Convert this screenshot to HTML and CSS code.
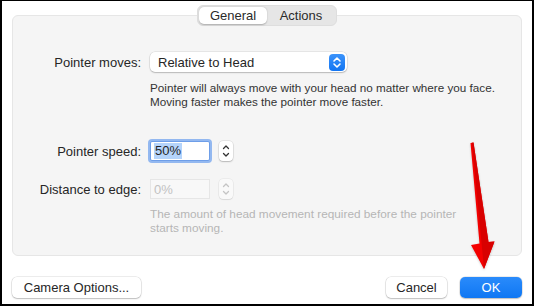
FILE: index.html
```html
<!DOCTYPE html>
<html lang="en">
<head>
  <meta charset="UTF-8" />
  <title>Head Pointer Options</title>
  <link rel="stylesheet" href="styles.css">
</head>
<body>
<div class="frame">
  <div class="tabs">
    <span class="tab active">General</span>
    <span class="tab">Actions</span>
  </div>

  <div class="panel">
    <div class="row first">
      <span class="lbl">Pointer moves:</span>
      <div class="popup">
        <span>Relative to Head</span>
        <span class="popup-arrows">
          <svg width="16" height="17" viewBox="0 0 16 17">
            <path d="M5 7 L8 4 L11 7" fill="none" stroke="#fff" stroke-width="1.6" stroke-linecap="round" stroke-linejoin="round"/>
            <path d="M5 10 L8 13 L11 10" fill="none" stroke="#fff" stroke-width="1.6" stroke-linecap="round" stroke-linejoin="round"/>
          </svg>
        </span>
      </div>
    </div>
    <p class="hint">Pointer will always move with your head no matter where you face.<br>Moving faster makes the pointer move faster.</p>

    <div class="row speed">
      <span class="lbl">Pointer speed:</span>
      <div class="field focus"><span class="sel">50%</span></div>
      <span class="stepper">
        <svg width="14" height="20" viewBox="0 0 14 20">
          <path d="M4.5 7.5 L7 5 L9.5 7.5" fill="none" stroke="#333" stroke-width="1.3" stroke-linecap="round" stroke-linejoin="round"/>
          <path d="M4.5 12.5 L7 15 L9.5 12.5" fill="none" stroke="#333" stroke-width="1.3" stroke-linecap="round" stroke-linejoin="round"/>
        </svg>
      </span>
    </div>

    <div class="row edge">
      <span class="lbl">Distance to edge:</span>
      <div class="field disabled">0%</div>
      <span class="stepper off">
        <svg width="14" height="20" viewBox="0 0 14 20">
          <path d="M4.5 7.5 L7 5 L9.5 7.5" fill="none" stroke="#c4c4c4" stroke-width="1.3" stroke-linecap="round" stroke-linejoin="round"/>
          <path d="M4.5 12.5 L7 15 L9.5 12.5" fill="none" stroke="#c4c4c4" stroke-width="1.3" stroke-linecap="round" stroke-linejoin="round"/>
        </svg>
      </span>
    </div>
    <p class="hint muted">The amount of head movement required before the pointer<br>starts moving.</p>
  </div>

  <div class="buttons">
    <button class="btn camera">Camera Options...</button>
    <button class="btn cancel">Cancel</button>
    <button class="btn primary">OK</button>
  </div>

  <!-- annotation arrow -->
  <svg class="arrow" width="534" height="306" viewBox="0 0 534 306">
    <polygon points="470.5,143 473.5,142.5 488.5,242 494.5,241.5 484,269 471,245 479.5,243.5" fill="#f40000"/>
    <polygon points="472,142.7 473.5,142.5 488.5,242 494.5,241.5 484,269" fill="#d80000"/>
  </svg>
</div>
</body>
</html>
```

FILE: styles.css
```css
body {
  margin: 0;
  font-family: "Liberation Sans", Arial, sans-serif;
  color: #262626;
}
.frame {
  position: relative;
  width: 534px;
  height: 306px;
  box-sizing: border-box;
  border-style: solid;
  border-color: #000;
  border-width: 1px 2px 2px 2px;
  background: #fff;
  display: flex;
  flex-direction: column;
  overflow: hidden;
}
.tabs {
  position: relative;
  z-index: 2;
  align-self: center;
  display: flex;
  margin: 4px 0 -11px;
  padding: 1px;
  width: 140px;
  height: 21px;
  box-sizing: border-box;
  background: #e6e6e6;
  border: 1px solid #dedede;
  border-radius: 6px;
  font-size: 13px;
}
.tab {
  flex: 1;
  display: flex;
  align-items: center;
  justify-content: center;
  border-radius: 5px;
  color: #2a2a2a;
}
.tab.active {
  background: #fff;
  box-shadow: 0 0.5px 1.5px rgba(0,0,0,0.25);
}
.panel {
  margin: 0 10px;
  padding: 36px 0 20px;
  background: #f5f5f5;
  border: 1px solid #e6e6e6;
  border-radius: 6px;
}
.row {
  display: flex;
  align-items: center;
  gap: 9px;
}
.lbl {
  width: 128px;
  text-align: right;
  font-size: 13px;
}
.popup {
  width: 197px;
  height: 20px;
  box-sizing: border-box;
  display: flex;
  align-items: center;
  justify-content: space-between;
  padding-left: 8px;
  background: #fff;
  border-radius: 5px;
  box-shadow: 0 0 0 0.5px rgba(0,0,0,0.12), 0 1px 1.5px rgba(0,0,0,0.2);
  font-size: 13px;
}
.popup-arrows {
  display: flex;
  width: 16px;
  height: 17px;
  margin-right: 2px;
  border-radius: 4px;
  background: linear-gradient(#3b93fb, #1275f2);
}
.hint {
  margin: 9px 0 0 137px;
  font-size: 11.7px;
  line-height: 14px;
  color: #333;
}
.hint.muted {
  margin-top: 8px;
  font-size: 11.8px;
  color: #b5b5b5;
}
.speed { margin-top: 32px; }
.edge { margin-top: 18px; }
.field {
  width: 60px;
  height: 20px;
  box-sizing: border-box;
  display: flex;
  align-items: center;
  padding-left: 3px;
  font-size: 13px;
  background: #fff;
  border: 1px solid #d6d6d6;
}
.field.focus {
  border-color: #6e9ee8;
  box-shadow: 0 0 0 2px #93b8f0;
  border-radius: 2px;
}
.sel {
  background: #b5d4fb;
  padding: 1px 1px;
  line-height: 14px;
}
.field.disabled {
  background: #f8f8f8;
  border-color: #e6e6e6;
  color: #c2c2c2;
}
.stepper {
  display: flex;
  width: 14px;
  height: 20px;
  background: #fff;
  border-radius: 4px;
  box-shadow: 0 0 0 0.5px rgba(0,0,0,0.12), 0 1px 1.5px rgba(0,0,0,0.2);
}
.stepper.off {
  background: #f9f9f9;
  box-shadow: 0 0 0 0.5px rgba(0,0,0,0.08), 0 1px 1px rgba(0,0,0,0.08);
}
.buttons {
  display: flex;
  align-items: center;
  gap: 13px;
  margin: 21px 10px 0;
}
.btn {
  height: 21px;
  padding: 0;
  font-family: inherit;
  font-size: 13px;
  color: #262626;
  background: #fff;
  border: none;
  border-radius: 5px;
  box-shadow: 0 0 0 0.5px rgba(0,0,0,0.14), 0 1px 1.5px rgba(0,0,0,0.2);
}
.camera { width: 129px; margin-right: auto; }
.cancel { width: 61px; }
.primary {
  width: 62px;
  color: #fff;
  background: linear-gradient(#2a8bfb, #0f77f3);
}
.arrow {
  position: absolute;
  top: -1px;
  left: -2px;
  pointer-events: none;
  filter: drop-shadow(0 1px 1px rgba(0,0,0,0.2));
}
```
